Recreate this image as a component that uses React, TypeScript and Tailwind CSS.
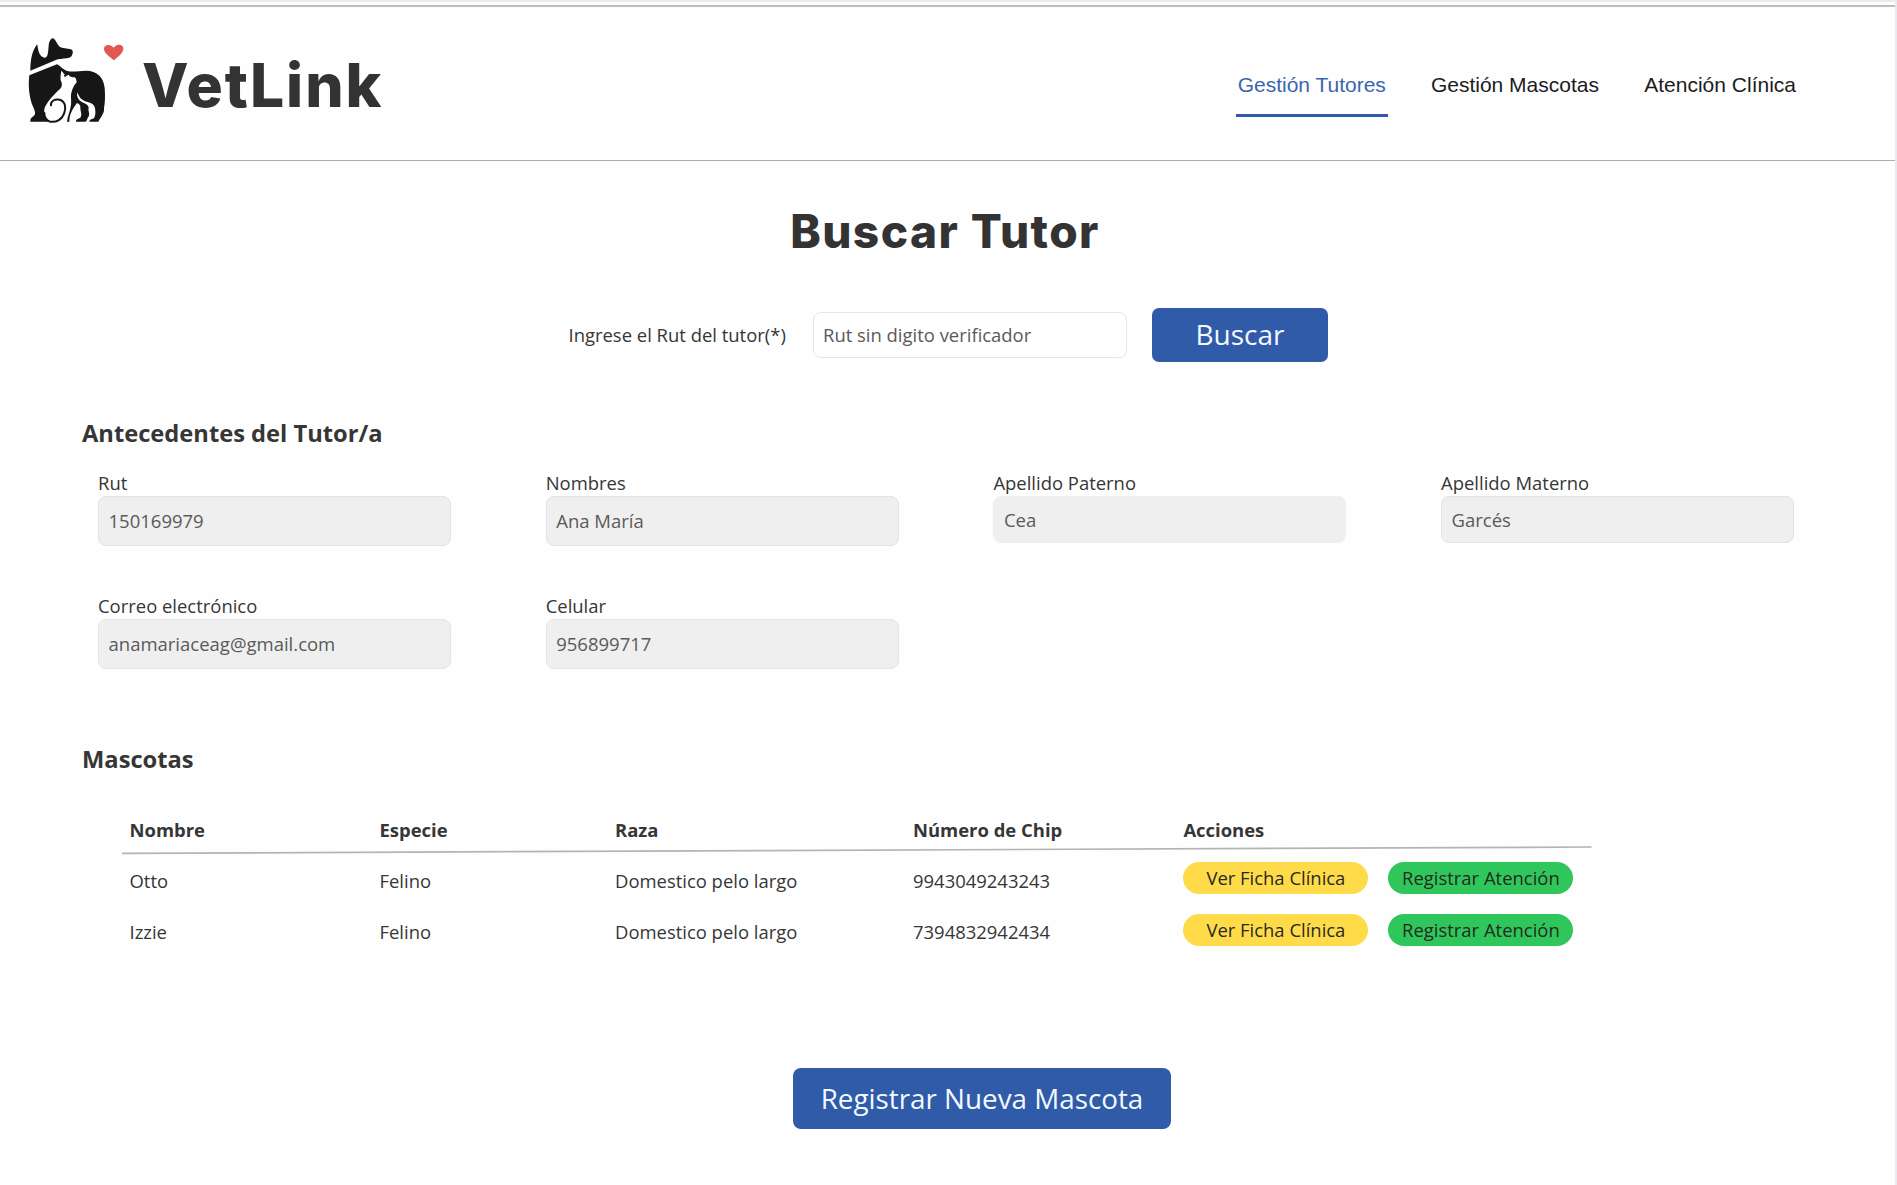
import React from "react";

type Field = { label: string; value: string; short?: boolean; plain?: boolean };

const fields: Field[] = [
  { label: "Rut", value: "150169979" },
  { label: "Nombres", value: "Ana María" },
  { label: "Apellido Paterno", value: "Cea", short: true, plain: true },
  { label: "Apellido Materno", value: "Garcés", short: true },
  { label: "Correo electrónico", value: "anamariaceag@gmail.com" },
  { label: "Celular", value: "956899717" },
];

const pets = [
  { name: "Otto", species: "Felino", breed: "Domestico pelo largo", chip: "9943049243243" },
  { name: "Izzie", species: "Felino", breed: "Domestico pelo largo", chip: "7394832942434" },
];

function Logo() {
  return (
    <svg width="120" height="110" viewBox="0 0 360 330" className="shrink-0" aria-label="VetLink">
      <g fill="#161616">
        <path d="M67 58 C69 78 74 96 88 98 C99 99 99 83 101 62 C102 49 108 39 114 40 C121 42 126 58 134 65 C141 70 158 69 167 73 C173 75 174 78 173 85 C171 95 165 99 155 100 C142 102 131 101 121 106 L46 137 C46 103 52 75 67 58 Z" />
        <path d="M43 151 L126 118 C138 124 145 136 160 139 C178 141 195 137 212 137 C247 137 266 158 269 189 C271 215 270 234 267 250 C269 262 260 273 250 290 L223 290 C224 283 232 282 237 280 C242 271 242 263 240 250 C239 240 230 234 218 231 C203 228 191 218 188 202 C183 213 190 227 205 233 C214 237 222 241 221 250 C218 258 227 267 220 276 C215 281 217 290 210 290 L183 290 C183 281 193 282 197 277 C202 267 195 258 196 244 C193 237 189 233 185 235 C175 250 163 265 163 290 L156 290 C157 276 165 260 168 239 C170 223 165 210 171 197 C174 189 175 184 185 172 C184 166 184 160 179 157 C170 156 163 155 161 149 L154 153 C148 148 144 142 139 137 C137 148 136 156 137 166 C142 176 142 183 137 190 C119 207 101 225 91 244 C82 263 92 282 109 290 L46 290 C45 281 49 278 56 273 C66 267 56 250 51 238 C43 213 39 182 43 151 Z" />
        <path d="M146 151 L150 157 L154 153 L151 149 Z" />
      </g>
      <path d="M108 241 C106 228 120 221 134 224 C152 229 153 249 148 263 C142 283 124 293 106 290 C94 288 88 278 88 264" fill="none" stroke="#161616" strokeWidth="6" strokeLinecap="round" />
      <path d="M297 106 C283 95 268 85 267 73 C266 59 286 54 296 68 C305 54 326 57 325 72 C324 85 309 95 297 106 Z" fill="#e25750" />
    </svg>
  );
}

function Header() {
  return (
    <header className="h-[161px] border-t-[2px] border-[#e9e9f2]">
      <div className="mt-[3px] flex h-[156px] items-start justify-between border-b border-t-[2px] border-b-[#adadad] border-t-[#bdbdbd]">
        <div className="flex pl-[15px] pt-[18px]">
          <Logo />
          <span className="ml-[7px] mt-[20px] whitespace-nowrap font-['Inter'] text-[60.5px] font-extrabold leading-[80px] tracking-[1.9px] text-[#333]">
            VetLink
          </span>
        </div>
        <nav className="mr-[99px] mt-[62px] flex font-['Liberation_Sans'] text-[21px] leading-[32px] text-[#1c1c1c]">
          <a className="mr-[43px] h-[48px] border-b-[3px] border-[#315ba9] px-[2px] text-[#3b65b0]">Gestión Tutores</a>
          <a className="mr-[45.3px]">Gestión Mascotas</a>
          <a>Atención Clínica</a>
        </nav>
      </div>
    </header>
  );
}

function FieldBox({ label, value, short, plain }: Field) {
  return (
    <div className="h-[123px] w-[353px]">
      <div className="h-[26px] text-[18.45px] leading-[26px]">{label}</div>
      <div
        className={`flex items-center rounded-[8px] border bg-[#efefef] pl-[9.5px] text-[18.5px] text-[#5a5a5a] ${short ? "h-[47px]" : "h-[50px]"} ${plain ? "border-[#efefef]" : "border-[#e3e3e3]"}`}
      >
        {value}
      </div>
    </div>
  );
}

const columns = "grid grid-cols-[250px_235.5px_298px_270.4px_auto] pl-[7.5px]";

function PetTable() {
  return (
    <div className="ml-[122px] w-[1470px] text-[18.45px]">
      <div className={`${columns} h-[37px] font-bold leading-[28px]`}>
        <span>Nombre</span>
        <span>Especie</span>
        <span>Raza</span>
        <span>Número de Chip</span>
        <span>Acciones</span>
      </div>
      <svg width="1470" height="9" viewBox="0 0 1470 9" className="-mt-[7px] block">
        <line x1="0" y1="7.4" x2="1469.5" y2="1" stroke="#b4b4b4" strokeWidth="1.7" />
      </svg>
      <div className="pt-[7px]">
        {pets.map((pet) => (
          <div key={pet.name} className={`${columns} h-[51.5px]`}>
            <span className="mt-[4.5px] leading-[28px]">{pet.name}</span>
            <span className="mt-[4.5px] leading-[28px]">{pet.species}</span>
            <span className="mt-[4.5px] leading-[28px]">{pet.breed}</span>
            <span className="mt-[4.5px] leading-[28px]">{pet.chip}</span>
            <span className="flex gap-[20px] text-[#262a20]">
              <button className="h-[32px] w-[185px] whitespace-nowrap rounded-full bg-[#ffdb4a]">Ver Ficha Clínica</button>
              <button className="h-[32px] w-[185px] whitespace-nowrap rounded-full bg-[#2fc75c]">Registrar Atención</button>
            </span>
          </div>
        ))}
      </div>
    </div>
  );
}

export default function App() {
  return (
    <div className="h-[1185px] w-full overflow-hidden border-r-[2px] border-[#e9e9f2] bg-[#fefefe] font-['Open_Sans'] text-[#363636]">
      <Header />
      <main>
        <h1 className="mt-[40px] pr-[5px] text-center font-['Inter'] text-[46px] font-extrabold leading-[60px] tracking-[1.45px] text-[#333]">
          Buscar Tutor
        </h1>
        <div className="ml-[568.5px] mt-[46px] flex h-[55px] items-center">
          <label className="w-[244.5px] whitespace-nowrap text-[18.45px]">Ingrese el Rut del tutor(*)</label>
          <input
            className="h-[46px] w-[314px] rounded-[8px] border-[1.5px] border-[#e6e6e6] bg-white pb-[1px] pl-[9px] text-[18.45px] placeholder:text-[#5a5a5a]"
            placeholder="Rut sin digito verificador"
          />
          <button className="ml-[25px] mt-[1px] h-[54px] w-[176px] rounded-[7px] bg-[#2f5ba9] pb-[2px] text-[28px] text-[#f4f8ff]">Buscar</button>
        </div>
        <h2 className="ml-[82px] mt-[54px] text-[23.7px] font-bold leading-[34px]">Antecedentes del Tutor/a</h2>
        <div className="ml-[98px] mt-[20px] grid w-[1791px] grid-cols-[repeat(4,447.7px)]">
          {fields.map((f) => (
            <FieldBox key={f.label} {...f} />
          ))}
        </div>
        <h2 className="ml-[82px] mt-[26px] text-[23.7px] font-bold leading-[34px]">Mascotas</h2>
        <div className="mt-[40px]">
          <PetTable />
        </div>
        <button className="ml-[793px] mt-[103px] h-[60.5px] w-[378px] whitespace-nowrap rounded-[8px] bg-[#2f5ba9] pt-[1.5px] text-[27.8px] text-[#f4f8ff]">
          Registrar Nueva Mascota
        </button>
      </main>
    </div>
  );
}
